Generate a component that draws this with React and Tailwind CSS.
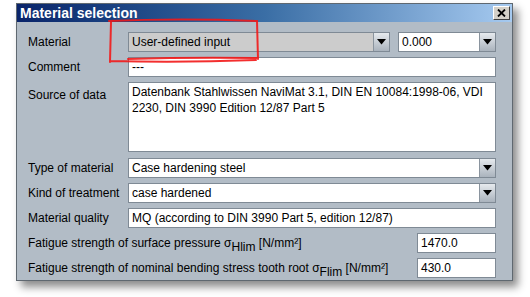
import React from "react";

const font = { fontFamily: '"Liberation Sans", Arial, sans-serif' };

function Arrow() {
  return (
    <div className="w-[16px] h-full flex items-center justify-center border-l border-[#8a949e] bg-gradient-to-b from-[#e6eaee] to-[#aab3bd]">
      <svg width="9" height="6" viewBox="0 0 9 6">
        <polygon points="0,0 9,0 4.5,5.5" fill="#000" />
      </svg>
    </div>
  );
}

function Combo({ value, grey, className = "" }) {
  return (
    <div className={`h-[20px] flex border border-[#7f8a95] ${grey ? "bg-[#cccccc]" : "bg-white"} ${className}`}>
      <div className="flex-1 flex items-center pl-[3px] text-[12px] text-black whitespace-nowrap overflow-hidden">{value}</div>
      <Arrow />
    </div>
  );
}

function Field({ value, className = "" }) {
  return (
    <div className={`h-[20px] flex items-center pl-[3px] border border-[#7f8a95] bg-white text-[12px] text-black whitespace-nowrap overflow-hidden ${className}`}>
      {value}
    </div>
  );
}

function Row({ label, children }) {
  return (
    <div className="flex items-center h-[20px]">
      <div className="w-[100px] text-[12px] text-black whitespace-nowrap">{label}</div>
      <div className="flex-1">{children}</div>
    </div>
  );
}

export default function App() {
  return (
    <div className="relative w-[530px] h-[297px] bg-white overflow-hidden" style={font}>
      <div className="absolute left-[16px] top-[3px] w-[497px] h-[278px] border border-[#5f6870] bg-[#b2bcc6] shadow-[5px_6px_8px_rgba(0,0,0,0.45)] flex flex-col">
        <div className="h-[18px] flex items-center justify-between pl-[3px] pr-[2px] bg-gradient-to-r from-[#0a246a] via-[#3a6ea5] to-[#a6caf0]">
          <span className="text-white font-bold text-[14px] leading-[18px]">Material selection</span>
          <div className="w-[17px] h-[14px] bg-[#d4d0c8] border border-t-white border-l-white border-r-[#404040] border-b-[#404040] flex items-center justify-center">
            <svg width="9" height="8" viewBox="0 0 9 8">
              <path d="M1 0.5 L8 7.5 M8 0.5 L1 7.5" stroke="#000" strokeWidth="1.8" />
            </svg>
          </div>
        </div>
        <div className="flex flex-col gap-[5px] pt-[10px] pl-[11px] pr-[16px]">
          <Row label="Material">
            <div className="flex gap-[8px]">
              <Combo value="User-defined input" grey className="w-[262px]" />
              <Combo value="0.000" className="flex-1" />
            </div>
          </Row>
          <Row label="Comment">
            <Field value="---" />
          </Row>
          <div className="flex h-[70px] mb-[1px]">
            <div className="w-[100px] text-[12px] text-black pt-[4px] whitespace-nowrap">Source of data</div>
            <div className="flex-1 border border-[#7f8a95] bg-white text-[12px] text-black leading-[16px] pl-[3px] pt-[1px] pr-[6px]">
              Datenbank Stahlwissen NaviMat 3.1, DIN EN 10084:1998-06, VDI 2230, DIN 3990 Edition 12/87 Part 5
            </div>
          </div>
          <Row label="Type of material">
            <Combo value="Case hardening steel" />
          </Row>
          <Row label="Kind of treatment">
            <Combo value="case hardened" />
          </Row>
          <Row label="Material quality">
            <Field value="MQ (according to DIN 3990 Part 5, edition 12/87)" />
          </Row>
          <div className="flex items-center h-[20px]">
            <div className="flex-1 text-[12px] text-black whitespace-nowrap">
              Fatigue strength of surface pressure σ<span className="relative top-[4px] text-[12px]">Hlim</span> [N/mm²]
            </div>
            <Field value="1470.0" className="w-[79px]" />
          </div>
          <div className="flex items-center h-[20px]">
            <div className="flex-1 text-[12px] text-black whitespace-nowrap">
              Fatigue strength of nominal bending stress tooth root σ<span className="relative top-[4px] text-[12px]">Flim</span> [N/mm²]
            </div>
            <Field value="430.0" className="w-[79px]" />
          </div>
        </div>
      </div>
      <svg className="absolute left-0 top-0 pointer-events-none" width="530" height="297" viewBox="0 0 530 297">
        <path
          d="M111 22 L110 62 M109 21 Q180 18 257 21 L258 59 M110 61 Q180 63 256 60 M128 59 Q190 57 257 58"
          fill="none"
          stroke="#f21818"
          strokeWidth="2"
          strokeLinecap="round"
          opacity="0.9"
        />
      </svg>
    </div>
  );
}
